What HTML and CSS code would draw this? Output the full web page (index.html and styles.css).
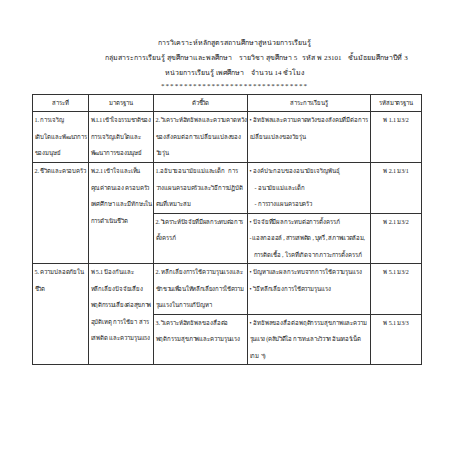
FILE: index.html
```html
<!DOCTYPE html>
<html lang="th">
<head>
<meta charset="utf-8">
<link rel="stylesheet" href="styles.css">
</head>
<body>
<div class="page">
  <div class="head">
    <div class="hl">การวิเคราะห์หลักสูตรสถานศึกษาสู่หน่วยการเรียนรู้</div>
    <div class="hl hl2">กลุ่มสาระการเรียนรู้ สุขศึกษาและพลศึกษา&nbsp;&nbsp;&nbsp;&nbsp;รายวิชา สุขศึกษา 5&nbsp;&nbsp;&nbsp;รหัส พ 23101&nbsp;&nbsp;&nbsp;&nbsp;ชั้นมัธยมศึกษาปีที่ 3</div>
    <div class="hl">หน่วยการเรียนรู้ เพศศึกษา&nbsp;&nbsp;&nbsp;&nbsp;จำนวน 14 ชั่วโมง</div>
    <div class="hl stars">********************************</div>
  </div>
  <table class="grid">
    <colgroup>
      <col class="c1"><col class="c2"><col class="c3"><col class="c4"><col class="c5">
    </colgroup>
    <tr class="th">
      <td>สาระที่</td><td>มาตรฐาน</td><td>ตัวชี้วัด</td><td>สาระการเรียนรู้</td><td>รหัสมาตรฐาน</td>
    </tr>
    <tr class="r1">
      <td>1. การเจริญ<br>เติบโตและพัฒนาการ<br>ของมนุษย์</td>
      <td><span class="tight">พ.1.1 เข้าใจธรรมชาติของ</span><br>การเจริญเติบโตและ<br>พัฒนาการของมนุษย์</td>
      <td>2. วิเคราะห์อิทธิพลและความคาดหวัง<br>ของสังคมต่อการเปลี่ยนแปลงของ<br>วัยรุ่น</td>
      <td>• อิทธิพลและความคาดหวังของสังคมที่มีต่อการ<br>เปลี่ยนแปลงของวัยรุ่น</td>
      <td class="code">พ 1.1 ม3/2</td>
    </tr>
    <tr class="r2a">
      <td rowspan="2">2. ชีวิตและครอบครัว</td>
      <td rowspan="2">พ.2.1 เข้าใจและเห็น<br>คุณค่าตนเอง ครอบครัว<br>เพศศึกษา และมีทักษะใน<br>การดำเนินชีวิต</td>
      <td>1.อธิบายอนามัยแม่และเด็ก&nbsp; การ<br>วางแผนครอบครัวและวิธีการปฏิบัติ<br>ตนที่เหมาะสม</td>
      <td>• องค์ประกอบของอนามัยเจริญพันธุ์<br><span class="ind">- อนามัยแม่และเด็ก</span><br><span class="ind">- การวางแผนครอบครัว</span></td>
      <td class="code">พ 2.1 ม3/1</td>
    </tr>
    <tr class="r2b">
      <td><span class="tight">2. วิเคราะห์ปัจจัยที่มีผลกระทบต่อการ</span><br>ตั้งครรภ์</td>
      <td>• ปัจจัยที่มีผลกระทบต่อการตั้งครรภ์<br><span class="tight">- แอลกอฮอล์ , สารเสพติด , บุหรี่ , สภาพแวดล้อม,</span><br><span class="ind2">การติดเชื้อ , โรคที่เกิดจากภาวะการตั้งครรภ์</span></td>
      <td class="code">พ 2.1 ม3/2</td>
    </tr>
    <tr class="r3a">
      <td rowspan="2">5. ความปลอดภัยใน<br>ชีวิต</td>
      <td rowspan="2">พ 5.1 ป้องกันและ<br>หลีกเลี่ยงปัจจัยเสี่ยง<br><span class="tight">พฤติกรรมเสี่ยงต่อสุขภาพ</span><br>อุบัติเหตุ การใช้ยา&nbsp; สาร<br>เสพติด และความรุนแรง</td>
      <td>2. หลีกเลี่ยงการใช้ความรุนแรงและ<br><span class="tight">ชักชวนเพื่อนให้หลีกเลี่ยงการใช้ความ</span><br>รุนแรงในการแก้ปัญหา</td>
      <td>• ปัญหาและผลกระทบจากการใช้ความรุนแรง<br>• วิธีหลีกเลี่ยงการใช้ความรุนแรง</td>
      <td class="code">พ 5.1 ม3/2</td>
    </tr>
    <tr class="r3b">
      <td>3. วิเคราะห์อิทธิพลของสื่อต่อ<br>พฤติกรรมสุขภาพและความรุนแรง</td>
      <td>• อิทธิพลของสื่อต่อพฤติกรรมสุขภาพและความ<br><span class="tight">รุนแรง (คลิปวิดีโอ การทะเลาะวิวาท อินเทอร์เน็ต</span><br>เกม ฯ)</td>
      <td class="code">พ 5.1 ม3/3</td>
    </tr>
  </table>
</div>
</body>
</html>
```

FILE: styles.css
```css
html, body {
  margin: 0;
  padding: 0;
  background: #ffffff;
}
.page {
  width: 453px;
  height: 453px;
  overflow: hidden;
  font-family: "Liberation Serif", "Noto Sans", "DejaVu Sans", serif;
  color: #1a1a1a;
  font-size: 7px;
}
.head {
  padding-top: 36px;
  display: flex;
  flex-direction: column;
  align-items: center;
  padding-left: 16px;
}
.hl {
  line-height: 15px;
  white-space: nowrap;
  font-size: 7px;
}
.hl2 {
  margin-left: 44px;
}
.stars {
  line-height: 11px;
  letter-spacing: 1.1px;
}
.grid {
  margin-left: 32px;
  margin-top: 2px;
  border-collapse: collapse;
  table-layout: fixed;
  width: 389px;
}
.c1 { width: 56px; }
.c2 { width: 65px; }
.c3 { width: 94px; }
.c4 { width: 123px; }
.c5 { width: 51px; }
.grid td {
  border: 1px solid #333;
  vertical-align: top;
  padding: 0 0 0 1.5px;
  line-height: 16.5px;
  white-space: nowrap;
  font-size: 6px;
  letter-spacing: -0.1px;
}
.tight {
  letter-spacing: -0.3px;
}
.th td {
  height: 16px;
  text-align: center;
  vertical-align: middle;
  line-height: 14px;
  padding: 0;
}
.r1 td { height: 50px; }
.r2a td { height: 47px; }
.r2b td { height: 47px; }
.r3a td { height: 48px; }
.r3b td { height: 47px; }
.grid td.code {
  text-align: center;
  padding: 0;
}
.ind { padding-left: 5px; }
.ind2 { padding-left: 4px; }
```
